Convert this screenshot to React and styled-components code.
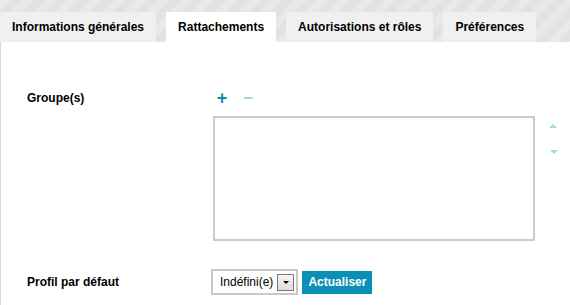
import styled, { createGlobalStyle } from "styled-components";

const Global = createGlobalStyle`
  html, body { margin: 0; padding: 0; background: #fff; }
  body { font-family: "Liberation Sans", Arial, sans-serif; color: #000; }
`;

const Page = styled.div`
  width: 570px;
  height: 305px;
  overflow: hidden;
  display: flex;
  flex-direction: column;
`;

const TabBar = styled.div`
  height: 42px;
  flex-shrink: 0;
  display: flex;
  align-items: flex-end;
  gap: 10px;
  box-sizing: border-box;
  background: repeating-linear-gradient(
    135deg,
    #e9e9e9 0px,
    #e9e9e9 8px,
    #e2e2e2 8px,
    #e2e2e2 16px
  );
`;

const Tab = styled.div`
  height: 30px;
  flex-shrink: 0;
  white-space: nowrap;
  display: flex;
  align-items: center;
  padding: 0 12px;
  font-size: 12px;
  font-weight: bold;
  background: ${(p) => (p.$active ? "#fff" : "#f0f0f0")};
`;

const Content = styled.div`
  flex: 1;
  border-left: 1px solid #d6d6d6;
  padding: 46px 0 0 26px;
  display: flex;
  flex-direction: column;
`;

const Row = styled.div`
  display: grid;
  grid-template-columns: 183px auto;
  align-items: ${(p) => p.$align || "start"};
  margin-top: ${(p) => p.$top || 0}px;
`;

const Label = styled.div`
  font-size: 12px;
  font-weight: bold;
  padding-top: ${(p) => p.$top || 0}px;
`;

const ListArea = styled.div`
  display: flex;
  flex-direction: column;
`;

const Tools = styled.div`
  display: flex;
  gap: 14px;
  padding-left: 6px;
  height: 20px;
  align-items: center;
`;

const ToolBtn = styled.span`
  width: 12px;
  font-size: 18px;
  font-weight: bold;
  line-height: 12px;
  color: ${(p) => (p.$off ? "#a8d8e6" : "#0a8db3")};
  text-align: center;
`;

const ListRow = styled.div`
  display: flex;
  margin-top: 8px;
  gap: 12px;
`;

const ListBox = styled.div`
  width: 318px;
  height: 121px;
  border: 2px solid #cacaca;
  margin-left: 3px;
`;

const Arrows = styled.div`
  display: flex;
  flex-direction: column;
  gap: 22px;
  padding-top: 8px;
  padding-left: 2px;
`;

const Arrow = styled.div`
  width: 0;
  height: 0;
  border-left: 4px solid transparent;
  border-right: 4px solid transparent;
  ${(p) =>
    p.$down
      ? "border-top: 4px solid #a8d8e6; margin-left: 1px;"
      : "border-bottom: 4px solid #a8d8e6;"}
`;

const Controls = styled.div`
  display: flex;
  align-items: center;
  gap: 4px;
  margin-left: 1px;
`;

const Select = styled.div`
  height: 26px;
  box-sizing: border-box;
  border: 2px solid #c8c8c8;
  display: flex;
  align-items: center;
  padding: 0 2px 0 7px;
  font-size: 12px;
  gap: 4px;
`;

const DropBtn = styled.div`
  width: 15px;
  height: 15px;
  border: 1px solid #7a7a7a;
  background: linear-gradient(#f6f6f6, #dcdcdc);
  display: flex;
  align-items: center;
  justify-content: center;
  &::after {
    content: "";
    border-left: 3px solid transparent;
    border-right: 3px solid transparent;
    border-top: 3px solid #000;
    margin-top: 1px;
  }
`;

const Button = styled.div`
  height: 23px;
  padding: 0 6px;
  display: flex;
  align-items: center;
  background: #0a90b5;
  color: #fff;
  font-size: 12px;
  font-weight: bold;
`;

export default function App() {
  return (
    <Page>
      <Global />
      <TabBar>
        <Tab>Informations générales</Tab>
        <Tab $active>Rattachements</Tab>
        <Tab>Autorisations et rôles</Tab>
        <Tab>Préférences</Tab>
      </TabBar>
      <Content>
        <Row>
          <Label $top={3}>Groupe(s)</Label>
          <ListArea>
            <Tools>
              <ToolBtn>+</ToolBtn>
              <ToolBtn $off>−</ToolBtn>
            </Tools>
            <ListRow>
              <ListBox />
              <Arrows>
                <Arrow />
                <Arrow $down />
              </Arrows>
            </ListRow>
          </ListArea>
        </Row>
        <Row $align="center" $top={28}>
          <Label>Profil par défaut</Label>
          <Controls>
            <Select>
              Indéfini(e)
              <DropBtn />
            </Select>
            <Button>Actualiser</Button>
          </Controls>
        </Row>
      </Content>
    </Page>
  );
}
